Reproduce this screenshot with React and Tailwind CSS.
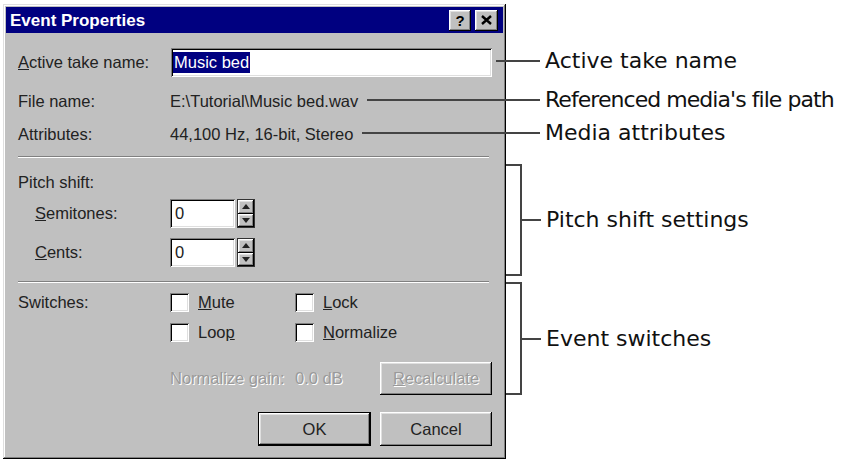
import React from "react";

const raised =
  "shadow-[inset_-1px_-1px_0_#000,inset_1px_1px_0_#fff,inset_-2px_-2px_0_#808080,inset_2px_2px_0_#dfdfdf]";
const sunken =
  "shadow-[inset_1px_1px_0_#808080,inset_-1px_-1px_0_#fff,inset_2px_2px_0_#000,inset_-2px_-2px_0_#dfdfdf]";

function Check({ children }) {
  return (
    <div className="flex items-center">
      <div className={`w-[19px] h-[19px] bg-white ${sunken}`} />
      <span className="ml-[9px]">{children}</span>
    </div>
  );
}

function Spinner() {
  return (
    <div className="ml-[2px] w-[18px] h-[29px] border border-[#333] flex flex-col bg-[#c0c0c0]">
      <div className={`flex-1 flex items-center justify-center ${raised}`}>
        <svg width="8" height="5" viewBox="0 0 8 5">
          <path d="M4 0 L8 5 L0 5 Z" fill="#222" />
        </svg>
      </div>
      <div className={`flex-1 flex items-center justify-center ${raised}`}>
        <svg width="8" height="5" viewBox="0 0 8 5">
          <path d="M0 0 L8 0 L4 5 Z" fill="#222" />
        </svg>
      </div>
    </div>
  );
}

function Disabled({ children, className = "" }) {
  return (
    <span className={`text-[#9a9a9a] [text-shadow:1px_1px_0_#fff] ${className}`}>
      {children}
    </span>
  );
}

export default function App() {
  return (
    <div className="relative w-[842px] h-[460px] bg-white overflow-hidden flex">
      {/* Dialog */}
      <div
        className={`ml-[3px] mt-[4px] w-[503px] h-[455px] bg-[#c0c0c0] p-[3px] flex flex-col shrink-0 text-[16.5px] text-[#222] [font-family:'Liberation_Sans',Arial,sans-serif] shadow-[inset_-1px_-1px_0_#000,inset_1px_1px_0_#dfdfdf,inset_-2px_-2px_0_#808080,inset_2px_2px_0_#fff]`}
      >
        {/* Title bar */}
        <div className="h-[26px] bg-[#000080] flex items-center justify-between pl-[4px] pr-[5px]">
          <span className="text-white font-bold text-[17px] leading-none">Event Properties</span>
          <div className="flex gap-[4px]">
            <div className={`w-[22px] h-[21px] bg-[#c0c0c0] flex items-center justify-center ${raised}`}>
              <span className="font-bold text-[15px] leading-none text-black">?</span>
            </div>
            <div className={`w-[23px] h-[21px] bg-[#c0c0c0] flex items-center justify-center ${raised}`}>
              <svg width="11" height="10" viewBox="0 0 11 10">
                <path d="M1 1 L10 9 M10 1 L1 9" stroke="#000" strokeWidth="2.4" />
              </svg>
            </div>
          </div>
        </div>

        {/* Body */}
        <div className="pl-[12px] pr-[11px] flex flex-col">
          <div className="mt-[15px] h-[29px] flex items-center">
            <span className="w-[153px] shrink-0">
              <u>A</u>ctive take name:
            </span>
            <div className={`flex-1 h-full bg-white flex items-center pl-[2px] ${sunken}`}>
              <span className="bg-[#000080] text-white leading-[21px] px-[1px]">Music bed</span>
            </div>
          </div>

          <div className="mt-[14px] h-[20px] flex items-center">
            <span className="w-[152px] shrink-0">File name:</span>
            <span>E:\Tutorial\Music bed.wav</span>
          </div>
          <div className="mt-[13px] h-[20px] flex items-center">
            <span className="w-[152px] shrink-0">Attributes:</span>
            <span>44,100 Hz, 16-bit, Stereo</span>
          </div>

          <div className="mt-[12px] mr-[3px] border-t border-[#808080] border-b border-b-white" />

          <div className="mt-[14px] h-[20px] flex items-center">Pitch shift:</div>
          <div className="mt-[7px] h-[29px] flex items-center">
            <span className="w-[152px] shrink-0 pl-[17px]">
              <u>S</u>emitones:
            </span>
            <div className={`w-[65px] h-full bg-white flex items-center pl-[5px] ${sunken}`}>0</div>
            <Spinner />
          </div>
          <div className="mt-[10px] h-[29px] flex items-center">
            <span className="w-[152px] shrink-0 pl-[17px]">
              <u>C</u>ents:
            </span>
            <div className={`w-[65px] h-full bg-white flex items-center pl-[5px] ${sunken}`}>0</div>
            <Spinner />
          </div>

          <div className="mt-[14px] mr-[3px] border-t border-[#808080] border-b border-b-white" />

          <div className="mt-[10px] h-[19px] flex items-center">
            <span className="w-[152px] shrink-0">Switches:</span>
            <div className="w-[125px] shrink-0">
              <Check>
                <u>M</u>ute
              </Check>
            </div>
            <Check>
              <u>L</u>ock
            </Check>
          </div>
          <div className="mt-[11px] h-[19px] flex items-center">
            <span className="w-[152px] shrink-0" />
            <div className="w-[125px] shrink-0">
              <Check>
                Loo<u>p</u>
              </Check>
            </div>
            <Check>
              <u>N</u>ormalize
            </Check>
          </div>

          <div className="mt-[20px] h-[33px] flex items-center">
            <span className="w-[152px] shrink-0" />
            <Disabled className="w-[125px] shrink-0">Normalize gain:</Disabled>
            <Disabled className="w-[85px] shrink-0">0.0 dB</Disabled>
            <div className={`w-[112px] h-full bg-[#c0c0c0] flex items-center justify-center ${raised}`}>
              <Disabled>
                <u>R</u>ecalculate
              </Disabled>
            </div>
          </div>

          <div className="mt-[17px] h-[34px] flex justify-end gap-[9px]">
            <div className="w-[113px] h-full border border-black">
              <div className={`w-full h-full bg-[#c0c0c0] flex items-center justify-center ${raised}`}>OK</div>
            </div>
            <div className={`w-[112px] h-full bg-[#c0c0c0] flex items-center justify-center ${raised}`}>Cancel</div>
          </div>
        </div>
      </div>

      {/* Annotations */}
      <div className="flex flex-col text-[22px] leading-[26px] text-[#111] [font-family:'DejaVu_Sans',Verdana,sans-serif]">
        <div className="mt-[48px] pl-[39px] whitespace-nowrap">Active take name</div>
        <div className="mt-[13px] pl-[39px] whitespace-nowrap tracking-[-0.95px]">Referenced media's file path</div>
        <div className="mt-[7px] pl-[39px] whitespace-nowrap">Media attributes</div>
        <div className="mt-[18px] flex items-center">
          <div className="w-[16px] h-[112px] border-y-2 border-r-2 border-[#444]" />
          <div className="w-[19px] h-[2px] bg-[#444]" />
          <span className="ml-[5px] whitespace-nowrap">Pitch shift settings</span>
        </div>
        <div className="mt-[6px] flex items-center">
          <div className="w-[16px] h-[113px] border-y-2 border-r-2 border-[#444]" />
          <div className="w-[19px] h-[2px] bg-[#444]" />
          <span className="ml-[5px] whitespace-nowrap">Event switches</span>
        </div>
      </div>

      {/* Callout lines */}
      <svg className="absolute left-0 top-0 pointer-events-none" width="842" height="460">
        <g stroke="#444" strokeWidth="2">
          <line x1="496" y1="61" x2="540" y2="61" />
          <line x1="367" y1="100" x2="540" y2="100" />
          <line x1="362" y1="133" x2="540" y2="133" />
        </g>
      </svg>
    </div>
  );
}
